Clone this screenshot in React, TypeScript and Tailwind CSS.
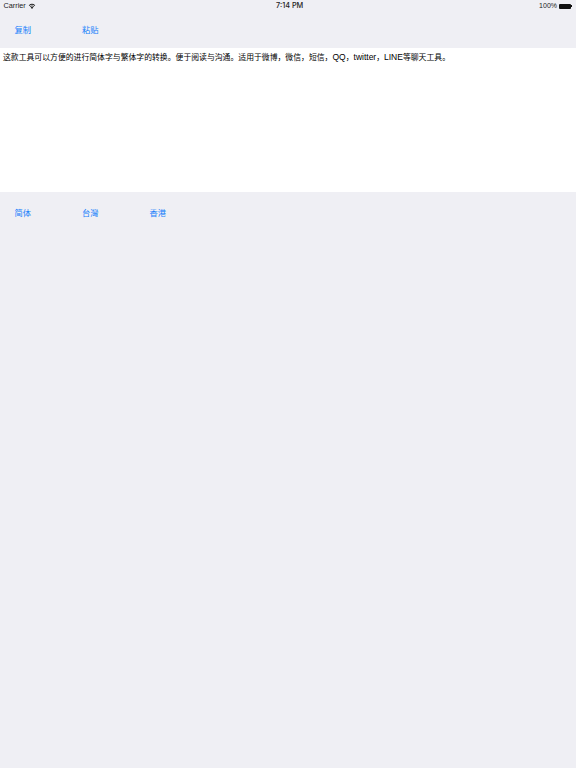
const font = "font-['Liberation_Sans','Noto_Sans_CJK_SC',sans-serif]";

function Btn({ label }: { label: string }) {
  return <button className="w-[67.5px] text-left pl-[14.5px] pt-[1px] text-[8.25px] leading-[12px] text-[#147efb]">{label}</button>;
}

function Latin({ children }: { children: string }) {
  return <span className="text-[8.5px]">{children}</span>;
}

export default function App() {
  return (
    <div className={`flex h-[768px] w-[576px] flex-col overflow-hidden bg-[#efeff4] ${font}`}>
      {/* Status bar */}
      <div className="relative flex h-[12px] items-center justify-between pl-[3.5px] pr-[4px] text-[7.3px] text-[#222]">
        <div className="flex items-center gap-[2px] pt-[1px]">
          <span>Carrier</span>
          <svg width="8" height="6" viewBox="0 0 16 12" fill="#222" className="-mt-[2px]">
            <path d="M8 12 L5.4 8.8 A4 4 0 0 1 10.6 8.8 Z" />
            <path d="M3.6 6.8 A6.8 6.8 0 0 1 12.4 6.8 L11.4 8 A5.3 5.3 0 0 0 4.6 8 Z" />
            <path d="M1.6 4.6 A9.6 9.6 0 0 1 14.4 4.6 L13.3 5.8 A8 8 0 0 0 2.7 5.8 Z" />
          </svg>
        </div>
        <span className="absolute left-[276px] top-[1px] font-['Inter'] font-medium">7:14 PM</span>
        <div className="flex items-center gap-[2px] pt-[1px]">
          <span className="text-[7px]">100%</span>
          <div className="-mt-[1px] flex items-center">
            <div className="h-[5px] w-[12px] rounded-[1px] bg-[#111]" />
            <div className="h-[2px] w-[1px] bg-[#111]" />
          </div>
        </div>
      </div>

      {/* Copy / paste */}
      <div className="flex h-[36px] items-center">
        <Btn label="复制" />
        <Btn label="粘贴" />
      </div>

      {/* Text area */}
      <div className="h-[144px] bg-white px-[3px] pt-[3px] text-[7.85px] leading-[12px] text-black">
        这款工具可以方便的进行简体字与繁体字的转换。便于阅读与沟通。适用于微博，微信，短信，<Latin>QQ</Latin>，<Latin>twitter</Latin>，<Latin>LINE</Latin>等聊天工具。
      </div>

      {/* Conversion */}
      <div className="flex h-[42px] items-center">
        <Btn label="简体" />
        <Btn label="台灣" />
        <Btn label="香港" />
      </div>
    </div>
  );
}
